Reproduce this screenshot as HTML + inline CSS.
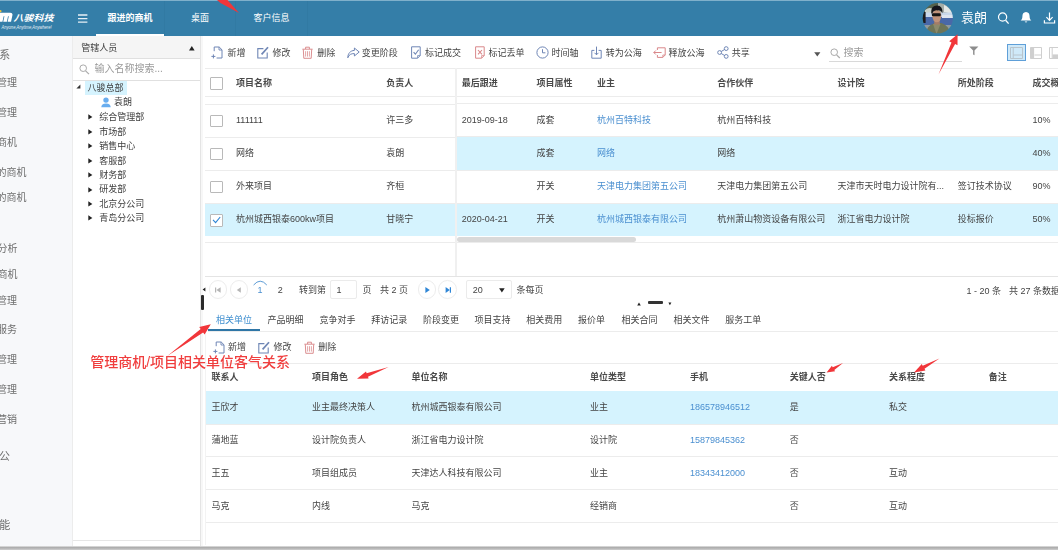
<!DOCTYPE html>
<html lang="zh-CN">
<head>
<meta charset="utf-8">
<title>跟进的商机</title>
<style>
*{box-sizing:border-box;margin:0;padding:0}
html,body{width:1058px;height:550px;overflow:hidden;background:#fff}
body{font-family:"Liberation Sans","Noto Sans CJK SC",sans-serif;font-size:9px;color:#444;position:relative}
.abs{position:absolute}
.t{position:absolute;white-space:nowrap;line-height:12px;height:12px;filter:blur(0.3px)}
.b{font-weight:bold;color:#4a4a4a}
.lk{color:#4a8fd0}
/* header */
#hdr{position:absolute;left:0;top:0;width:1058px;height:36.4px;background:#347ea8}
#hdr .strip{position:absolute;left:0;top:0;width:1058px;height:1px;background:#7fb0cb}
#hdr .tab{position:absolute;top:1px;height:35px;color:#fff;text-align:center;line-height:34px;font-size:9px;border-right:1px solid #317aa3}
#hdr .tab.on{font-weight:bold}
#hdr .tab.on:after{content:"";position:absolute;left:0;right:0;bottom:0;height:2px;background:#fff}
/* sidebar */
#side{position:absolute;left:0;top:36px;width:72px;height:514px;background:#f7f8fa}
#side .t{font-size:10px;color:#6e6e6e;left:auto}
/* tree panel */
#tree{position:absolute;left:72px;top:36px;width:129px;height:514px;background:#fff;border-left:1px solid #ececec;border-right:1px solid #e4e4e4}
#tree .ph{position:absolute;left:0;top:0;width:127px;height:23px;background:#f5f5f5;border-bottom:1px solid #e0e0e0}
#tree .sr{position:absolute;left:0;top:23px;width:127px;height:22px;border-bottom:1px solid #e0e0e0}
#split{position:absolute;left:201px;top:36px;width:2px;height:514px;background:#f7f7f7}
.hl{background:#d5f3fe}
.ln{position:absolute;height:1px;background:#ececec}
.vl{position:absolute;width:1.4px;background:#ececec}
.cb{position:absolute;width:12.8px;height:12.8px;border:1px solid #b9b9b9;background:#fff;border-radius:1px}
.circ{position:absolute;width:18px;height:18px;border:1px solid #ededed;border-radius:50%;background:#fff}
</style>
</head>
<body>
<!-- ============ HEADER ============ -->
<div id="hdr">
  <div class="strip"></div>
  <!-- logo -->
  <svg class="abs" style="left:0;top:5px" width="60" height="26" viewBox="0 0 60 26">
    <circle cx="0.4" cy="6.2" r="1.1" fill="#f0c63c"/>
    <g transform="translate(3.2,0) skewX(-12)"><path d="M-2.4 16.7V7.8H8.8Q11.4 7.8 11.4 10.3V16.7H8V11.2H7.2V16.7H3.6V11.2H2.8V16.7Z" fill="#fff"/></g>
    <text x="13.4" y="15.9" font-size="8.8" font-weight="bold" font-style="italic" fill="#fff" font-family="Liberation Sans, Noto Sans CJK SC, sans-serif" textLength="40" lengthAdjust="spacingAndGlyphs">八骏科技</text>
    <text x="1.6" y="23.7" font-size="4.6" font-style="italic" fill="#e8f1f6" font-family="Liberation Sans, sans-serif" textLength="50" lengthAdjust="spacingAndGlyphs">Anyone,Anytime,Anywhere!</text>
  </svg>
  <!-- hamburger -->
  <svg class="abs" style="left:78px;top:13px" width="10" height="11" viewBox="0 0 10 11"><path d="M0 2H9.4M0 5.6H9.4M0 9.2H9.4" stroke="#e6eff5" stroke-width="1.3" fill="none"/></svg>
  <div class="tab on" style="left:96px;width:69px">跟进的商机</div>
  <div class="tab" style="left:165px;width:71px">桌面</div>
  <div class="tab" style="left:236px;width:72px">客户信息</div>
  <!-- avatar -->
  <svg class="abs" style="left:922px;top:2px" width="32" height="32" viewBox="0 0 32 32">
    <defs><clipPath id="avc"><circle cx="15.8" cy="16.2" r="15.1"/></clipPath>
    <filter id="avb" x="-5%" y="-5%" width="110%" height="110%"><feGaussianBlur stdDeviation="0.55"/></filter></defs>
    <g clip-path="url(#avc)"><g filter="url(#avb)">
      <rect width="32" height="32" fill="#7d8a86"/>
      <rect x="0" y="0" width="16" height="11" fill="#55624c"/>
      <path d="M3 8 Q8 4 12 8 L12 11 L3 11Z" fill="#c9d2cb"/>
      <rect x="16" y="0" width="16" height="11" fill="#a4aca6"/>
      <path d="M22 3 Q27 5 31 12 L22 10Z" fill="#e4e8e6"/>
      <rect x="0" y="10.5" width="32" height="4.5" fill="#c9d8ea"/>
      <rect x="0" y="15" width="32" height="8.5" fill="#4a68a8"/>
      <rect x="20" y="13" width="12" height="3" fill="#dfe6f0"/>
      <rect x="0" y="10" width="3.6" height="11" fill="#1c1c1c"/>
      <rect x="0" y="23" width="32" height="9" fill="#8e9aa0"/>
      <path d="M3.5 32 Q5 23.5 11.5 21.5 L19.5 21 Q27 23.5 28.5 32 Z" fill="#6d7458"/>
      <path d="M11 22 L14.5 32 L18.5 22 Z" fill="#8c8a6c"/>
      <path d="M12.2 18 H17.8 V22.6 H12.2Z" fill="#a67c66"/>
      <ellipse cx="14.8" cy="14" rx="4.5" ry="6.3" fill="#bf927a"/>
      <path d="M9.2 11.4 Q8.6 3.6 15 3.4 Q21.2 3.6 20.4 11.6 Q19.2 8 15.4 8.4 Q11.6 8 10.4 11.4Z" fill="#17191a"/>
      <rect x="9.8" y="11.2" width="9" height="3.1" rx="1.4" fill="#141414"/>
    </g></g>
  </svg>
  <div class="t" style="left:961px;top:10px;font-size:13px;line-height:16px;height:16px;color:#fff">袁朗</div>
  <!-- search -->
  <svg class="abs" style="left:997px;top:11px" width="13" height="14" viewBox="0 0 13 14"><circle cx="5.6" cy="6" r="4.1" stroke="#fff" stroke-width="1.2" fill="none"/><path d="M8.6 9.2L11.6 12.6" stroke="#fff" stroke-width="1.3"/></svg>
  <!-- bell -->
  <svg class="abs" style="left:1020px;top:11px" width="12" height="14" viewBox="0 0 12 14"><path d="M6 1 C3.4 1 2.4 3.2 2.4 5.4 C2.4 7.6 1.6 8.6 0.6 9.6 L11.4 9.6 C10.4 8.6 9.6 7.6 9.6 5.4 C9.6 3.2 8.6 1 6 1Z" fill="#fff"/><path d="M4.6 10.6 Q6 12.6 7.4 10.6Z" fill="#fff"/></svg>
  <!-- download -->
  <svg class="abs" style="left:1043px;top:11px" width="15" height="14" viewBox="0 0 15 14"><path d="M6.5 1.5V9M3.4 6.2L6.5 9.3L9.6 6.2M1.4 9.2V12H11.6V9.2" stroke="#fff" stroke-width="1.2" fill="none"/></svg>
  <!-- red arrow top -->
  <svg class="abs" style="left:210px;top:0" width="36" height="16" viewBox="0 0 36 16"><path d="M29 13 L17.5 0 L7 0 L10.5 3 Z" fill="#f1363a"/></svg>
</div>
<!-- ============ SIDEBAR ============ -->
<div id="side">
  <div class="t" style="right:61.7px;top:12.1px;font-size:11px;line-height:14px;height:14px">客户关系</div>
  <div class="t" style="right:55px;top:40.4px;font-size:10px;line-height:14px;height:14px">客户管理</div>
  <div class="t" style="right:55px;top:70.4px;font-size:10px;line-height:14px;height:14px">联系人管理</div>
  <div class="t" style="right:55px;top:100.3px;font-size:10px;line-height:14px;height:14px">我的商机</div>
  <div class="t" style="right:45.5px;top:130px;font-size:10px;line-height:14px;height:14px">跟进的商机</div>
  <div class="t" style="right:45.5px;top:155.1px;font-size:10px;line-height:14px;height:14px">下属的商机</div>
  <div class="t" style="right:54.5px;top:206.3px;font-size:10px;line-height:14px;height:14px">商机分析</div>
  <div class="t" style="right:54.5px;top:232.2px;font-size:10px;line-height:14px;height:14px">公海商机</div>
  <div class="t" style="right:55px;top:257.8px;font-size:10px;line-height:14px;height:14px">合同管理</div>
  <div class="t" style="right:55px;top:287.2px;font-size:10px;line-height:14px;height:14px">售后服务</div>
  <div class="t" style="right:55px;top:317.2px;font-size:10px;line-height:14px;height:14px">产品管理</div>
  <div class="t" style="right:55px;top:347.2px;font-size:10px;line-height:14px;height:14px">费用管理</div>
  <div class="t" style="right:55px;top:377.2px;font-size:10px;line-height:14px;height:14px">市场营销</div>
  <div class="t" style="right:62px;top:413.3px;font-size:11px;line-height:14px;height:14px">协同办公</div>
  <div class="t" style="right:61.7px;top:481.8px;font-size:11px;line-height:14px;height:14px">系统功能</div>
</div>
<!-- ============ TREE ============ -->
<div id="tree">
  <div class="ph"></div>
  <div class="sr"></div>
  <div class="t" style="left:8.3px;top:5.8px;color:#3d3d3d;">管辖人员</div>
  <svg class="abs" style="left:116px;top:10px" width="6" height="5" viewBox="0 0 6 5"><path d="M0 4.4L2.8 0L5.6 4.4Z" fill="#222"/></svg>
  <svg class="abs" style="left:5.5px;top:28px" width="11" height="11" viewBox="0 0 11 11"><circle cx="4.2" cy="4.2" r="3.3" stroke="#aaa" stroke-width="1" fill="none"/><path d="M6.6 6.8L10 10.2" stroke="#aaa" stroke-width="1.2"/></svg>
  <div class="t" style="left:21.4px;top:26.3px;font-size:10px;line-height:14px;height:14px;color:#9a9a9a;">输入名称搜索...</div>
  <svg class="abs" style="left:3.4000000000000057px;top:48px" width="5" height="5" viewBox="0 0 5 5"><path d="M4.4 0.4V4.4H0.4Z" fill="#333"/></svg>
  <div class="abs hl" style="left:11.6px;top:45px;width:42.5px;height:13.6px"></div>
  <div class="t" style="left:14.5px;top:45.6px;color:#3d3d3d;">八骏总部</div>
  <svg class="abs" style="left:27.5px;top:60.5px" width="10" height="11" viewBox="0 0 10 11"><circle cx="5" cy="3.1" r="2.7" fill="#68adef"/><path d="M0.3 10.3 Q0.3 6.4 5 6.4 Q9.7 6.4 9.7 10.3 Z" fill="#68adef"/></svg>
  <div class="t" style="left:41px;top:60.3px;color:#3d3d3d;">袁朗</div>
  <svg class="abs" style="left:15px;top:78.4px" width="5" height="6" viewBox="0 0 5 6"><path d="M0.3 0.3L4.4 2.9L0.3 5.5Z" fill="#222"/></svg>
  <div class="t" style="left:26.3px;top:75.2px;color:#3d3d3d;">综合管理部</div>
  <svg class="abs" style="left:15px;top:92.9px" width="5" height="6" viewBox="0 0 5 6"><path d="M0.3 0.3L4.4 2.9L0.3 5.5Z" fill="#222"/></svg>
  <div class="t" style="left:26.3px;top:89.7px;color:#3d3d3d;">市场部</div>
  <svg class="abs" style="left:15px;top:107.4px" width="5" height="6" viewBox="0 0 5 6"><path d="M0.3 0.3L4.4 2.9L0.3 5.5Z" fill="#222"/></svg>
  <div class="t" style="left:26.3px;top:104.2px;color:#3d3d3d;">销售中心</div>
  <svg class="abs" style="left:15px;top:121.7px" width="5" height="6" viewBox="0 0 5 6"><path d="M0.3 0.3L4.4 2.9L0.3 5.5Z" fill="#222"/></svg>
  <div class="t" style="left:26.3px;top:118.5px;color:#3d3d3d;">客服部</div>
  <svg class="abs" style="left:15px;top:136.2px" width="5" height="6" viewBox="0 0 5 6"><path d="M0.3 0.3L4.4 2.9L0.3 5.5Z" fill="#222"/></svg>
  <div class="t" style="left:26.3px;top:133px;color:#3d3d3d;">财务部</div>
  <svg class="abs" style="left:15px;top:150.6px" width="5" height="6" viewBox="0 0 5 6"><path d="M0.3 0.3L4.4 2.9L0.3 5.5Z" fill="#222"/></svg>
  <div class="t" style="left:26.3px;top:147.4px;color:#3d3d3d;">研发部</div>
  <svg class="abs" style="left:15px;top:165px" width="5" height="6" viewBox="0 0 5 6"><path d="M0.3 0.3L4.4 2.9L0.3 5.5Z" fill="#222"/></svg>
  <div class="t" style="left:26.3px;top:161.8px;color:#3d3d3d;">北京分公司</div>
  <svg class="abs" style="left:15px;top:179.4px" width="5" height="6" viewBox="0 0 5 6"><path d="M0.3 0.3L4.4 2.9L0.3 5.5Z" fill="#222"/></svg>
  <div class="t" style="left:26.3px;top:176.2px;color:#3d3d3d;">青岛分公司</div>
  <div class="ln" style="left:0;top:504px;width:127px;background:#e6e6e6"></div>
</div>
<div id="split"></div>
<!-- ============ MAIN ============ -->
<div id="main">
  <svg class="abs" style="left:211.4px;top:46.3px" width="12" height="13" viewBox="0 0 12 13"><path d="M3.2 5.2V1H8.2L11 3.8V12H5.6" stroke="#6f86b5" stroke-width="1" fill="none"/><path d="M8 1V4H11" stroke="#6f86b5" stroke-width="0.9" fill="none"/><path d="M0.4 10.4H4.4M2.4 8.4V12.4" stroke="#6f86b5" stroke-width="1"/></svg>
  <div class="t" style="left:227.4px;top:47px;color:#444;">新增</div>
  <svg class="abs" style="left:257.2px;top:46.3px" width="12" height="13" viewBox="0 0 12 13"><path d="M6.4 2.6H0.8V12H10.2V6.6" stroke="#6f86b5" stroke-width="1.1" fill="none"/><path d="M4.6 8.4L11 1.2" stroke="#6f86b5" stroke-width="1.7"/></svg>
  <div class="t" style="left:272.6px;top:47px;color:#444;">修改</div>
  <svg class="abs" style="left:302.4px;top:46.3px" width="11" height="13" viewBox="0 0 11 13"><path d="M0.4 3.2H10.6M3.6 3V1.2H7.4V3M1.3 3.4L1.8 12.3H9.2L9.7 3.4" stroke="#d9888a" stroke-width="0.95" fill="none"/><path d="M3.6 5.2V10.6M5.5 5.2V10.6M7.4 5.2V10.6" stroke="#d9888a" stroke-width="0.75" fill="none"/></svg>
  <div class="t" style="left:317.2px;top:47px;color:#444;">删除</div>
  <svg class="abs" style="left:346.6px;top:46.8px" width="13" height="12" viewBox="0 0 13 12"><path d="M7.4 1L12.2 5L7.4 9V6.6C4.2 6.4 2 7.6 0.8 10.8C0.8 6.4 3.4 3.6 7.4 3.4Z" stroke="#6f86b5" stroke-width="1" fill="none" stroke-linejoin="round"/></svg>
  <div class="t" style="left:361.8px;top:47px;color:#444;">变更阶段</div>
  <svg class="abs" style="left:411.2px;top:46.3px" width="10" height="13" viewBox="0 0 10 13"><path d="M0.6 0.8H9.2V9.6L6.6 12.2H0.6Z" stroke="#6f86b5" stroke-width="1" fill="none"/><path d="M9.2 9.6H6.6V12.2" stroke="#6f86b5" stroke-width="0.8" fill="none"/><path d="M2.6 6.2L4.4 8.2L7.6 3.8" stroke="#6f86b5" stroke-width="1.1" fill="none"/></svg>
  <div class="t" style="left:424.9px;top:47px;color:#444;">标记成交</div>
  <svg class="abs" style="left:475px;top:46.3px" width="10" height="13" viewBox="0 0 10 13"><path d="M0.6 0.8H9.2V9.6L6.6 12.2H0.6Z" stroke="#d9888a" stroke-width="1" fill="none"/><path d="M9.2 9.6H6.6V12.2" stroke="#d9888a" stroke-width="0.8" fill="none"/><path d="M3 4L7 8.4M7 4L3 8.4" stroke="#d9888a" stroke-width="1.1" fill="none"/></svg>
  <div class="t" style="left:488.5px;top:47px;color:#444;">标记丢单</div>
  <svg class="abs" style="left:535.8px;top:46.3px" width="13" height="13" viewBox="0 0 13 13"><circle cx="6.5" cy="6.5" r="5.6" stroke="#6f86b5" stroke-width="1" fill="none"/><path d="M6.5 3.2V6.8H9.4" stroke="#6f86b5" stroke-width="1" fill="none"/></svg>
  <div class="t" style="left:551.6px;top:47px;color:#444;">时间轴</div>
  <svg class="abs" style="left:591px;top:46.3px" width="11" height="13" viewBox="0 0 11 13"><path d="M3.4 4.4H0.8V12.2H10.2V4.4H7.6" stroke="#6f86b5" stroke-width="1" fill="none"/><path d="M5.5 0.6V8.8M3.5 6.8L5.5 8.8L7.5 6.8" stroke="#6f86b5" stroke-width="1" fill="none"/></svg>
  <div class="t" style="left:605.7px;top:47px;color:#444;">转为公海</div>
  <svg class="abs" style="left:653px;top:46.3px" width="13" height="13" viewBox="0 0 13 13"><path d="M4.4 4V1.8H12.2V9L9.8 11.4H4.4V9" stroke="#d9888a" stroke-width="1" fill="none"/><path d="M12.2 9H9.8V11.4" stroke="#d9888a" stroke-width="0.8" fill="none"/><path d="M8.6 6.5H0.8M2.8 4.5L0.8 6.5L2.8 8.5" stroke="#d9888a" stroke-width="1" fill="none"/></svg>
  <div class="t" style="left:668.4px;top:47px;color:#444;">释放公海</div>
  <svg class="abs" style="left:716.6px;top:46.3px" width="12" height="13" viewBox="0 0 12 13"><circle cx="2.6" cy="6.5" r="1.9" stroke="#6f86b5" stroke-width="1" fill="none"/><circle cx="9.2" cy="2.6" r="1.9" stroke="#6f86b5" stroke-width="1" fill="none"/><circle cx="9.2" cy="10.4" r="1.9" stroke="#6f86b5" stroke-width="1" fill="none"/><path d="M4.2 5.5L7.6 3.5M4.2 7.5L7.6 9.5" stroke="#6f86b5" stroke-width="1"/></svg>
  <div class="t" style="left:731.8px;top:47px;color:#444;">共享</div>
  <svg class="abs" style="left:814px;top:51.5px" width="7" height="5" viewBox="0 0 7 5"><path d="M0.2 0.3H6.4L3.3 4.6Z" fill="#555"/></svg>
  <svg class="abs" style="left:830px;top:48px" width="11" height="11" viewBox="0 0 11 11"><circle cx="4.2" cy="4.2" r="3.3" stroke="#aaa" stroke-width="1" fill="none"/><path d="M6.6 6.8L9.8 10" stroke="#aaa" stroke-width="1.2"/></svg>
  <div class="t" style="left:843.6px;top:46.1px;font-size:10px;line-height:14px;height:14px;color:#9a9a9a;">搜索</div>
  <div class="ln" style="left:829px;top:61px;width:133px;background:#d9d9d9"></div>
  <svg class="abs" style="left:969px;top:46px" width="10" height="10" viewBox="0 0 10 10"><path d="M0.2 0.6H9.4L5.5 4.6V9.2L4.1 8.6V4.6Z" fill="#8c8c8c"/></svg>
  <div class="abs" style="left:1007px;top:44px;width:19px;height:17px;background:#cfe9f9;border:1px solid #5f9fd8"></div>
  <svg class="abs" style="left:1010px;top:46.5px" width="13" height="12" viewBox="0 0 13 12"><path d="M0.5 0.5H12.5V11.5H0.5ZM3.2 0.5V11.5M3.2 8H12.5" stroke="#b9c4cc" stroke-width="1" fill="none"/></svg>
  <svg class="abs" style="left:1030px;top:46.5px" width="12" height="12" viewBox="0 0 12 12"><path d="M0.5 0.5H11.5V11.5H0.5Z" stroke="#cfcfcf" stroke-width="1" fill="none"/><rect x="0.5" y="0.5" width="3.6" height="11" fill="#cfcfcf"/><path d="M4.5 8H11.5" stroke="#cfcfcf" stroke-width="1"/></svg>
  <svg class="abs" style="left:1049px;top:46.5px" width="12" height="12" viewBox="0 0 12 12"><path d="M0.5 0.5H11.5V11.5H0.5Z" stroke="#cfcfcf" stroke-width="1" fill="none"/><path d="M3.2 0.5V11.5" stroke="#cfcfcf" stroke-width="1"/><rect x="3.5" y="7.4" width="8" height="4" fill="#cfcfcf"/></svg>
  <div class="abs hl" style="left:456.3px;top:137px;width:601.7px;height:32.6px"></div>
  <div class="abs hl" style="left:205px;top:203.4px;width:250.4px;height:32.6px"></div>
  <div class="abs hl" style="left:456.3px;top:203px;width:601.7px;height:32.6px"></div>
  <div class="ln" style="left:205px;top:68px;width:251px"></div>
  <div class="ln" style="left:205px;top:96px;width:251px"></div>
  <div class="ln" style="left:205px;top:104px;width:251px"></div>
  <div class="ln" style="left:205px;top:137px;width:251px"></div>
  <div class="ln" style="left:205px;top:170px;width:251px"></div>
  <div class="ln" style="left:205px;top:203px;width:251px"></div>
  <div class="ln" style="left:205px;top:242px;width:251px"></div>
  <div class="ln" style="left:456px;top:68px;width:602px"></div>
  <div class="ln" style="left:456px;top:96px;width:602px"></div>
  <div class="ln" style="left:456px;top:103.4px;width:602px"></div>
  <div class="ln" style="left:456px;top:136.2px;width:602px"></div>
  <div class="ln" style="left:456px;top:169.6px;width:602px"></div>
  <div class="ln" style="left:456px;top:202.5px;width:602px"></div>
  <div class="ln" style="left:456px;top:242px;width:602px"></div>
  <div class="vl" style="left:455.4px;top:68px;height:208.6px;background:#f0f0f0"></div>
  <div class="ln" style="left:205px;top:276.2px;width:853px;background:#e4e4e4"></div>
  <div class="abs" style="left:457px;top:237px;width:178.5px;height:5.2px;border-radius:3px;background:#d9d9d9"></div>
  <div class="cb" style="left:210px;top:77.3px"></div>
  <div class="cb" style="left:210px;top:114.6px"></div>
  <div class="cb" style="left:210px;top:147.6px"></div>
  <div class="cb" style="left:210px;top:180.5px"></div>
  <div class="cb" style="left:210px;top:213.8px"></div>
  <svg class="abs" style="left:212px;top:216.4px" width="9" height="8" viewBox="0 0 9 8"><path d="M1 3.8L3.6 6.6L8.2 1" stroke="#2f86d6" stroke-width="1.1" fill="none"/></svg>
  <div class="t b" style="left:236px;top:77px;">项目名称</div>
  <div class="t b" style="left:386.2px;top:77px;">负责人</div>
  <div class="t b" style="left:461.8px;top:77px;">最后跟进</div>
  <div class="t b" style="left:536.6px;top:77px;">项目属性</div>
  <div class="t b" style="left:597px;top:77px;">业主</div>
  <div class="t b" style="left:717.2px;top:77px;">合作伙伴</div>
  <div class="t b" style="left:837.6px;top:77px;">设计院</div>
  <div class="t b" style="left:957.8px;top:77px;">所处阶段</div>
  <div class="t b" style="left:1032.6px;top:77px;">成交概率</div>
  <div class="t" style="left:236px;top:114px;">111111</div>
  <div class="t" style="left:386.2px;top:114px;">许三多</div>
  <div class="t" style="left:461.8px;top:114px;">2019-09-18</div>
  <div class="t" style="left:536.6px;top:114px;">成套</div>
  <div class="t lk" style="left:597px;top:114px;">杭州百特科技</div>
  <div class="t" style="left:717.2px;top:114px;">杭州百特科技</div>
  <div class="t" style="left:1032.4px;top:114px;">10%</div>
  <div class="t" style="left:236px;top:147px;">网络</div>
  <div class="t" style="left:386.2px;top:147px;">袁朗</div>
  <div class="t" style="left:536.6px;top:147px;">成套</div>
  <div class="t lk" style="left:597px;top:147px;">网络</div>
  <div class="t" style="left:717.2px;top:147px;">网络</div>
  <div class="t" style="left:1032.4px;top:147px;">40%</div>
  <div class="t" style="left:236px;top:180px;">外来项目</div>
  <div class="t" style="left:386.2px;top:180px;">齐桓</div>
  <div class="t" style="left:536.6px;top:180px;">开关</div>
  <div class="t lk" style="left:597px;top:180px;">天津电力集团第五公司</div>
  <div class="t" style="left:717.2px;top:180px;">天津电力集团第五公司</div>
  <div class="t" style="left:837.6px;top:180px;">天津市天时电力设计院有...</div>
  <div class="t" style="left:957.8px;top:180px;">签订技术协议</div>
  <div class="t" style="left:1032.4px;top:180px;">90%</div>
  <div class="t" style="left:236px;top:213px;">杭州城西银泰600kw项目</div>
  <div class="t" style="left:386.2px;top:213px;">甘晓宁</div>
  <div class="t" style="left:461.8px;top:213px;">2020-04-21</div>
  <div class="t" style="left:536.6px;top:213px;">开关</div>
  <div class="t lk" style="left:597px;top:213px;">杭州城西银泰有限公司</div>
  <div class="t" style="left:717.2px;top:213px;">杭州萧山物资设备有限公司</div>
  <div class="t" style="left:837.6px;top:213px;">浙江省电力设计院</div>
  <div class="t" style="left:957.8px;top:213px;">投标报价</div>
  <div class="t" style="left:1032.4px;top:213px;">50%</div>
  <div class="circ" style="left:208.6px;top:280.4px;width:18.8px;height:18.8px"></div>
  <svg class="abs" style="left:214px;top:285.8px" width="8" height="8" viewBox="0 0 8 8"><path d="M1.6 1.4V6.6" stroke="#b5b5b5" stroke-width="1.2"/><path d="M6.6 1.2V6.8L2.4 4Z" fill="#b5b5b5"/></svg>
  <div class="circ" style="left:229.6px;top:280.4px;width:18.8px;height:18.8px"></div>
  <svg class="abs" style="left:235px;top:285.8px" width="8" height="8" viewBox="0 0 8 8"><path d="M5.8 1.2V6.8L1.8 4Z" fill="#b5b5b5"/></svg>
  <svg class="abs" style="left:252.6px;top:279.6px" width="15" height="6" viewBox="0 0 15 6"><path d="M0.6 5 Q7.2 -2.6 13.8 5" stroke="#5b9bd5" stroke-width="1" fill="none"/></svg>
  <div class="t" style="left:257.4px;top:284px;color:#4a8fd0;">1</div>
  <div class="t" style="left:277.8px;top:284px;color:#444;">2</div>
  <div class="t" style="left:299px;top:284px;">转到第</div>
  <div class="abs" style="left:330.4px;top:280.4px;width:26.8px;height:18.8px;border:1px solid #ebebeb;border-radius:2px"></div>
  <div class="t" style="left:336.4px;top:284px;">1</div>
  <div class="t" style="left:362.4px;top:284px;">页</div>
  <div class="t" style="left:380px;top:284px;">共 2 页</div>
  <div class="circ" style="left:417.5px;top:280.4px;width:18.8px;height:18.8px"></div>
  <svg class="abs" style="left:422.9px;top:285.8px" width="8" height="8" viewBox="0 0 8 8"><path d="M2.4 1V7L6.8 4Z" fill="#2f86d6"/></svg>
  <div class="circ" style="left:438.3px;top:280.4px;width:18.8px;height:18.8px"></div>
  <svg class="abs" style="left:443.7px;top:285.8px" width="8" height="8" viewBox="0 0 8 8"><path d="M1.6 1V7L5.8 4Z" fill="#2f86d6"/><path d="M6.4 1.2V6.8" stroke="#2f86d6" stroke-width="1.2"/></svg>
  <div class="abs" style="left:466.4px;top:280.4px;width:45.4px;height:18.8px;border:1px solid #ebebeb;border-radius:2px"></div>
  <div class="t" style="left:472.8px;top:284px;">20</div>
  <svg class="abs" style="left:499.4px;top:288px" width="6" height="5" viewBox="0 0 6 5"><path d="M0.1 0.3H5.7L2.9 4.4Z" fill="#222"/></svg>
  <div class="t" style="left:516.5px;top:284px;">条每页</div>
  <div class="t" style="left:966.6px;top:285px;">1 - 20 条</div>
  <div class="t" style="left:1009px;top:285px;">共 27 条数据</div>
  <svg class="abs" style="left:201.6px;top:287px" width="4" height="5" viewBox="0 0 4 5"><path d="M3.4 0.4V4.4L0.6 2.4Z" fill="#222"/></svg>
  <div class="abs" style="left:201.4px;top:295px;width:2.6px;height:14.6px;background:#2b2b2b;border-radius:1px"></div>
  <svg class="abs" style="left:637px;top:301.5px" width="4" height="4" viewBox="0 0 4 4"><path d="M0.2 3.4L2 0.6L3.8 3.4Z" fill="#222"/></svg>
  <div class="abs" style="left:648.2px;top:301.2px;width:15.2px;height:2.9px;background:#333;border-radius:1px"></div>
  <svg class="abs" style="left:668px;top:302px" width="4" height="4" viewBox="0 0 4 4"><path d="M0.4 0.6H3.4L1.9 3.2Z" fill="#222"/></svg>
  <div class="t lk" style="left:216px;top:314px;color:#3f8fd0;">相关单位</div>
  <div class="t" style="left:267.6px;top:314px;">产品明细</div>
  <div class="t" style="left:319.4px;top:314px;">竞争对手</div>
  <div class="t" style="left:371.2px;top:314px;">拜访记录</div>
  <div class="t" style="left:423px;top:314px;">阶段变更</div>
  <div class="t" style="left:474.6px;top:314px;">项目支持</div>
  <div class="t" style="left:526.3px;top:314px;">相关费用</div>
  <div class="t" style="left:578px;top:314px;">报价单</div>
  <div class="t" style="left:621.6px;top:314px;">相关合同</div>
  <div class="t" style="left:673.6px;top:314px;">相关文件</div>
  <div class="t" style="left:725.3px;top:314px;">服务工单</div>
  <div class="ln" style="left:208px;top:330.6px;width:850px;background:#ececec"></div>
  <div class="abs" style="left:208.4px;top:329px;width:51.6px;height:2px;background:#2f76a6"></div>
  <svg class="abs" style="left:212.6px;top:340.9px" width="12" height="13" viewBox="0 0 12 13"><path d="M3.2 5.2V1H8.2L11 3.8V12H5.6" stroke="#6f86b5" stroke-width="1" fill="none"/><path d="M8 1V4H11" stroke="#6f86b5" stroke-width="0.9" fill="none"/><path d="M0.4 10.4H4.4M2.4 8.4V12.4" stroke="#6f86b5" stroke-width="1"/></svg>
  <div class="t" style="left:228px;top:341px;color:#444;">新增</div>
  <svg class="abs" style="left:257.6px;top:340.9px" width="12" height="13" viewBox="0 0 12 13"><path d="M6.4 2.6H0.8V12H10.2V6.6" stroke="#6f86b5" stroke-width="1.1" fill="none"/><path d="M4.6 8.4L11 1.2" stroke="#6f86b5" stroke-width="1.7"/></svg>
  <div class="t" style="left:273.4px;top:341px;color:#444;">修改</div>
  <svg class="abs" style="left:303.6px;top:340.9px" width="11" height="13" viewBox="0 0 11 13"><path d="M0.4 3.2H10.6M3.6 3V1.2H7.4V3M1.3 3.4L1.8 12.3H9.2L9.7 3.4" stroke="#d9888a" stroke-width="0.95" fill="none"/><path d="M3.6 5.2V10.6M5.5 5.2V10.6M7.4 5.2V10.6" stroke="#d9888a" stroke-width="0.75" fill="none"/></svg>
  <div class="t" style="left:318.2px;top:341px;color:#444;">删除</div>
  <div class="abs hl" style="left:205px;top:391.2px;width:853px;height:32.4px"></div>
  <div class="ln" style="left:205px;top:363px;width:853px"></div>
  <div class="ln" style="left:205px;top:423.8px;width:853px"></div>
  <div class="ln" style="left:205px;top:456px;width:853px"></div>
  <div class="ln" style="left:205px;top:489px;width:853px"></div>
  <div class="ln" style="left:205px;top:522.2px;width:853px"></div>
  <div class="t b" style="left:211.6px;top:371px;">联系人</div>
  <div class="t b" style="left:312px;top:371px;">项目角色</div>
  <div class="t b" style="left:411.4px;top:371px;">单位名称</div>
  <div class="t b" style="left:590px;top:371px;">单位类型</div>
  <div class="t b" style="left:690px;top:371px;">手机</div>
  <div class="t b" style="left:789.8px;top:371px;">关键人否</div>
  <div class="t b" style="left:889px;top:371px;">关系程度</div>
  <div class="t b" style="left:988.8px;top:371px;">备注</div>
  <div class="t" style="left:211.6px;top:401px;">王欣才</div>
  <div class="t" style="left:312px;top:401px;">业主最终决策人</div>
  <div class="t" style="left:411.4px;top:401px;">杭州城西银泰有限公司</div>
  <div class="t" style="left:590px;top:401px;">业主</div>
  <div class="t lk" style="left:690px;top:401px;">186578946512</div>
  <div class="t" style="left:789.8px;top:401px;">是</div>
  <div class="t" style="left:889px;top:401px;">私交</div>
  <div class="t" style="left:211.6px;top:434px;">蒲地蓝</div>
  <div class="t" style="left:312px;top:434px;">设计院负责人</div>
  <div class="t" style="left:411.4px;top:434px;">浙江省电力设计院</div>
  <div class="t" style="left:590px;top:434px;">设计院</div>
  <div class="t lk" style="left:690px;top:434px;">15879845362</div>
  <div class="t" style="left:789.8px;top:434px;">否</div>
  <div class="t" style="left:211.6px;top:467px;">王五</div>
  <div class="t" style="left:312px;top:467px;">项目组成员</div>
  <div class="t" style="left:411.4px;top:467px;">天津达人科技有限公司</div>
  <div class="t" style="left:590px;top:467px;">业主</div>
  <div class="t lk" style="left:690px;top:467px;">18343412000</div>
  <div class="t" style="left:789.8px;top:467px;">否</div>
  <div class="t" style="left:889px;top:467px;">互动</div>
  <div class="t" style="left:211.6px;top:500px;">马克</div>
  <div class="t" style="left:312px;top:500px;">内线</div>
  <div class="t" style="left:411.4px;top:500px;">马克</div>
  <div class="t" style="left:590px;top:500px;">经销商</div>
  <div class="t" style="left:789.8px;top:500px;">否</div>
  <div class="t" style="left:889px;top:500px;">互动</div>
  <div class="vl" style="left:204.8px;top:331px;height:214px;background:#f3f3f3"></div>
  <div class="t" style="left:90.2px;top:352.5px;font-size:14px;line-height:18px;height:18px;color:#f03e3e;font-weight:500;">管理商机/项目相关单位客气关系</div>
  <svg class="abs" style="left:0;top:0;pointer-events:none" width="1058" height="550" viewBox="0 0 1058 550"><path d="M938.5 74.5 L955.1 44.1 L957.5 45.2 L957.6 34.2 L949.2 41.3 L951.5 42.4Z" fill="#f1363a"/><path d="M388.6 367.0 L366.6 373.2 L366.0 371.4 L357.0 378.8 L368.6 378.5 L368.0 376.7Z" fill="#f1363a"/><path d="M843.0 363.0 L832.7 367.2 L831.9 365.8 L826.6 372.6 L835.1 371.3 L834.3 369.9Z" fill="#f1363a"/><path d="M939.4 358.4 L922.7 365.7 L921.8 364.0 L914.0 372.6 L925.4 370.5 L924.5 368.8Z" fill="#f1363a"/><path d="M167.3 356.0 L203.1 332.5 L204.6 334.5 L210.8 324.3 L199.2 327.1 L200.7 329.1Z" fill="#f1363a"/></svg>
  <div class="abs" style="left:0;top:545.6px;width:1058px;height:4.4px;background:linear-gradient(#e6e6e6,#aaa 40%,#d0d0d0)"></div>
</div>
</body>
</html>
